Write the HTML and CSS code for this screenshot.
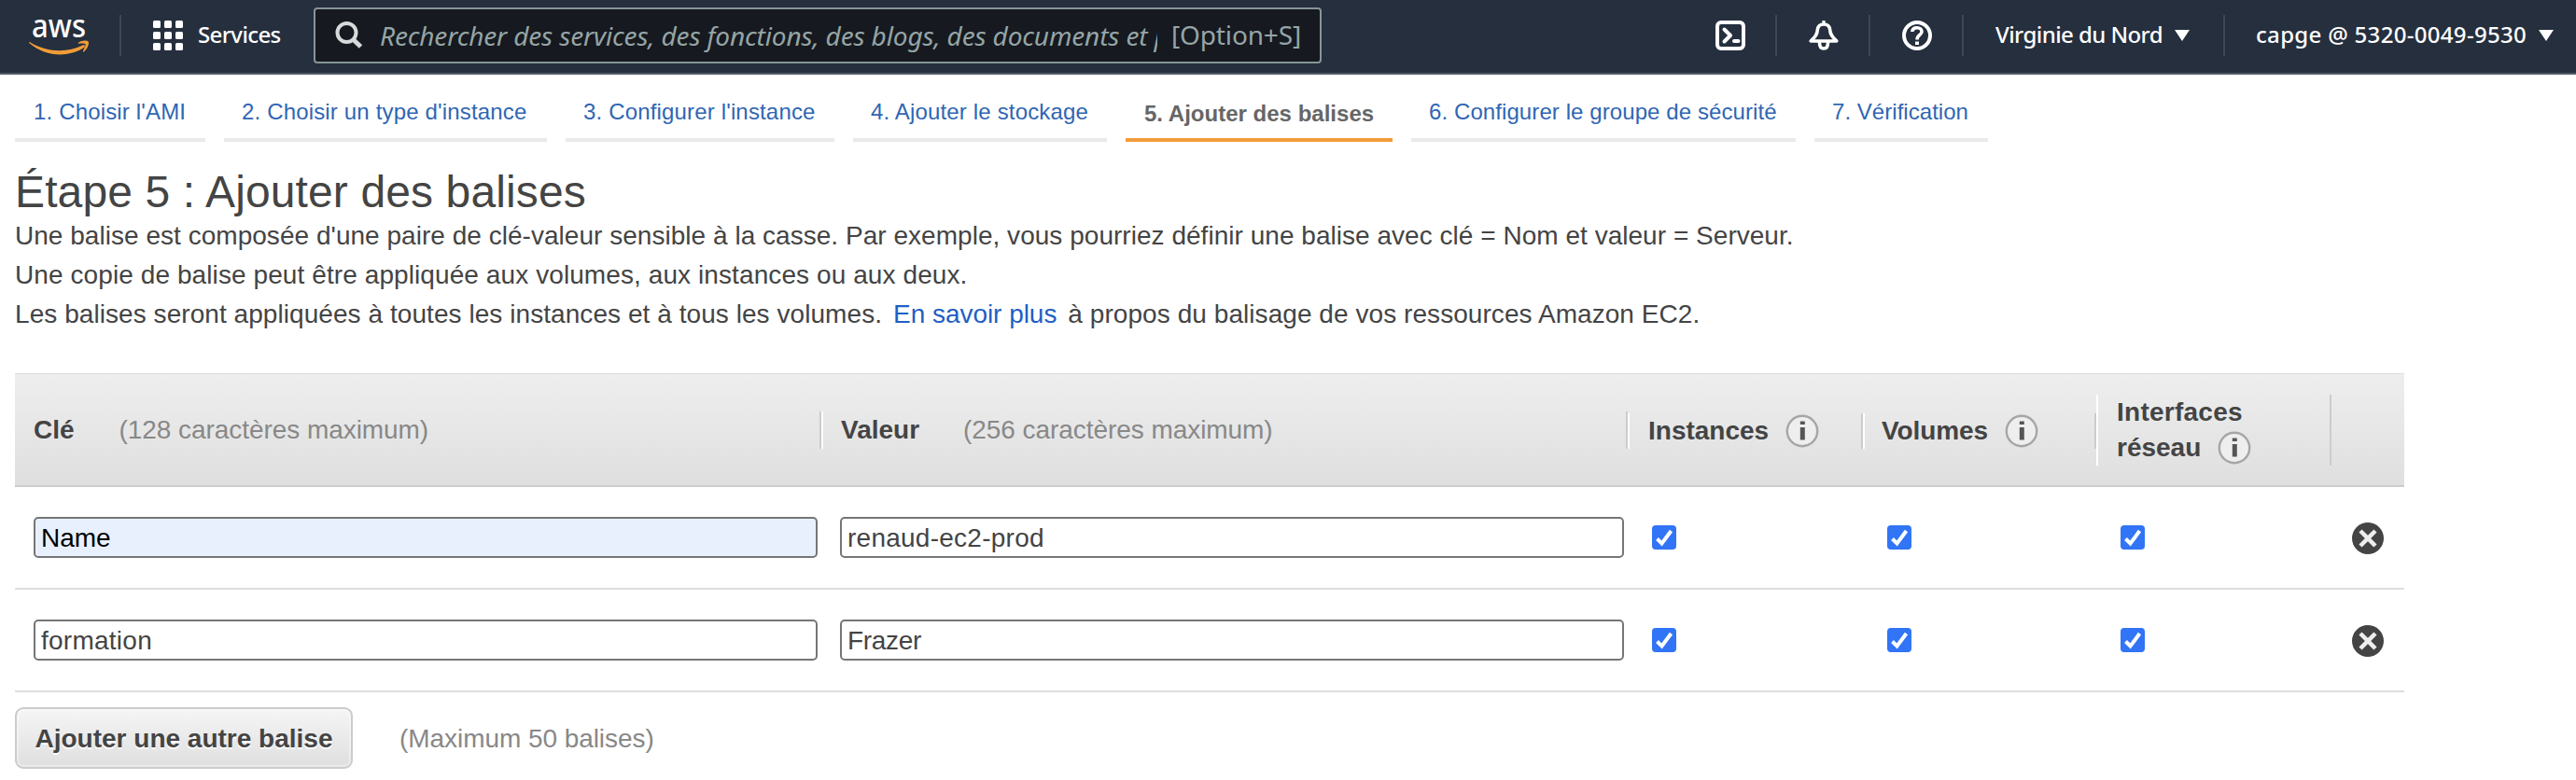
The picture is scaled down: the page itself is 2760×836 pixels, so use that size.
FILE: index.html
```
<!DOCTYPE html>
<html lang="fr">
<head>
<meta charset="utf-8">
<title>Étape 5 : Ajouter des balises</title>
<link rel="stylesheet" href="styles.css">
</head>
<body>
<header class="topbar">
  <svg class="logo" width="66" height="60" viewBox="0 -16 66 60">
    <text class="logo-text" x="3" y="22" textLength="58" lengthAdjust="spacingAndGlyphs">aws</text>
    <path d="M1.2 27.2C20 38.5 41 38.500 57.500 30.500C59.500 29.500 61 31.500 59 33C43 43.500 18 43.500 .8 28.500C-.2 27.500 .2 26.600 1.200 27.200Z" fill="#f29c38"/>
    <path d="M53 27.800C56 25 62 25 63.700 26.500C65 29 62 35.500 58.800 37.500C58 38 57.700 37.400 58 36.700C59.500 33.500 61.200 30 60.500 29.200C59.500 28.200 56 28.300 53.500 28.800C52.800 28.900 52.400 28.400 53 27.800Z" fill="#f29c38"/>
  </svg>
  <span class="sep"></span>
  <a class="services"><svg width="32" height="32" viewBox="0 0 32 32" fill="#fff">
    <rect width="8" height="8" rx="1.500"/><rect x="12" width="8" height="8" rx="1.500"/><rect x="24" width="8" height="8" rx="1.500"/>
    <rect y="12" width="8" height="8" rx="1.500"/><rect x="12" y="12" width="8" height="8" rx="1.500"/><rect x="24" y="12" width="8" height="8" rx="1.500"/>
    <rect y="24" width="8" height="8" rx="1.500"/><rect x="12" y="24" width="8" height="8" rx="1.500"/><rect x="24" y="24" width="8" height="8" rx="1.500"/></svg><span class="nav-text t-services">Services</span></a>
  <div class="search">
    <svg width="30" height="30" viewBox="0 0 30 30" fill="none" stroke="#d5dbdb"><circle cx="12.500" cy="12" r="10" stroke-width="4"/><path d="M19 19L27.500 27" stroke-width="5"/></svg>
    <span class="placeholder">Rechercher des services, des fonctions, des blogs, des documents et p</span>
    <span class="shortcut">[Option+S]</span>
  </div>
  <nav class="tools">
    <a class="tool"><svg width="32" height="32" viewBox="0 0 32 32" fill="none" stroke="#fff" stroke-width="4" stroke-linejoin="round" stroke-linecap="round"><rect x="2" y="2" width="28" height="28" rx="4"/><path d="M9.500 9.500L16 16L9.500 22.500" /><path d="M20 22H24.500"/></svg></a>
    <span class="sep"></span>
    <a class="tool bell"><svg width="32" height="32" viewBox="0 0 32 32" fill="none" stroke="#fff" stroke-width="3.600" stroke-linejoin="round" stroke-linecap="round"><path d="M16 1.500V4M16 4C11.500 4 9.500 7 9.300 10C9 16 6 18 2.200 22H29.800C26 18 23 16 22.700 10C22.500 7 20.500 4 16 4Z"/><path d="M11.500 24C11.500 28 13 30 16 30S20.500 28 20.500 24"/></svg></a>
    <span class="sep"></span>
    <a class="tool bell"><svg width="32" height="32" viewBox="0 0 32 32" fill="none" stroke="#fff"><circle cx="16" cy="16" r="14" stroke-width="4"/><path d="M10.800 12C11 9 13 7.800 16 7.800S21 9.500 21 12C21 15.500 16 15.500 16 20.500" stroke-width="3.600"/><path d="M16 22.500V26" stroke-width="4"/></svg></a>
    <span class="sep"></span>
    <a class="menu region"><span class="nav-text t-region">Virginie du Nord</span><i class="caret"></i></a>
    <span class="sep"></span>
    <a class="menu account"><span class="nav-text t-account">capge @ 5320-0049-9530</span><i class="caret"></i></a>
  </nav>
</header>

<main class="page">
  <nav class="steps">
    <a class="step s1">1. Choisir l'AMI</a>
    <a class="step s2">2. Choisir un type d'instance</a>
    <a class="step s3">3. Configurer l'instance</a>
    <a class="step s4">4. Ajouter le stockage</a>
    <a class="step s5 active">5. Ajouter des balises</a>
    <a class="step s6">6. Configurer le groupe de sécurité</a>
    <a class="step s7">7. Vérification</a>
  </nav>

  <h1 class="title">Étape 5 : Ajouter des balises</h1>
  <div class="intro">
    <p class="p1">Une balise est composée d'une paire de clé-valeur sensible à la casse. Par exemple, vous pourriez définir une balise avec clé = Nom et valeur = Serveur.</p>
    <p class="p2">Une copie de balise peut être appliquée aux volumes, aux instances ou aux deux.</p>
    <p class="p3"><span>Les balises seront appliquées à toutes les instances et à tous les volumes.</span><a class="link">En savoir plus</a><span>à propos du balisage de vos ressources Amazon EC2.</span></p>
  </div>

  <section class="tags">
    <div class="row head">
      <div class="cell"><b>Clé</b><span class="hint">(128 caractères maximum)</span></div>
      <div class="cell value"><b>Valeur</b><span class="hint">(256 caractères maximum)</span></div>
      <div class="cell low"><b>Instances</b><svg class="info" width="36" height="36" viewBox="0 0 36 36"><circle cx="18" cy="18" r="16.200" fill="#eee" stroke="#a6a6a6" stroke-width="2.400"/><path d="M18.300 14V27.500" stroke="#555" stroke-width="5"/><path d="M18.300 7.500V11" stroke="#555" stroke-width="5"/></svg></div>
      <div class="cell low volumes"><b>Volumes</b><svg class="info" width="36" height="36" viewBox="0 0 36 36"><circle cx="18" cy="18" r="16.200" fill="#eee" stroke="#a6a6a6" stroke-width="2.400"/><path d="M18.300 14V27.500" stroke="#555" stroke-width="5"/><path d="M18.300 7.500V11" stroke="#555" stroke-width="5"/></svg></div>
      <div class="cell network"><b>Interfaces</b><div class="second"><b>réseau</b><svg class="info" width="36" height="36" viewBox="0 0 36 36"><circle cx="18" cy="18" r="16.200" fill="#eee" stroke="#a6a6a6" stroke-width="2.400"/><path d="M18.300 14V27.500" stroke="#555" stroke-width="5"/><path d="M18.300 7.500V11" stroke="#555" stroke-width="5"/></svg></div></div>
      <div class="cell last"></div>
    </div>
    <div class="row">
      <input class="field autofilled" value="Name"><input class="field loose" value="renaud-ec2-prod">
      <span class="check"><svg width="26" height="26" viewBox="0 0 26 26"><rect width="26" height="26" rx="4" fill="#3174f6"/><path d="M5.500 14.500L10.500 19.500L20.500 6" fill="none" stroke="#fff" stroke-width="4"/></svg></span>
      <span class="check"><svg width="26" height="26" viewBox="0 0 26 26"><rect width="26" height="26" rx="4" fill="#3174f6"/><path d="M5.500 14.500L10.500 19.500L20.500 6" fill="none" stroke="#fff" stroke-width="4"/></svg></span>
      <span class="check"><svg width="26" height="26" viewBox="0 0 26 26"><rect width="26" height="26" rx="4" fill="#3174f6"/><path d="M5.500 14.500L10.500 19.500L20.500 6" fill="none" stroke="#fff" stroke-width="4"/></svg></span>
      <span class="remove"><svg width="34" height="34" viewBox="0 0 34 34"><circle cx="17" cy="17" r="17" fill="#444"/><path d="M9 9L25 25M25 9L9 25" stroke="#eee" stroke-width="4.500"/></svg></span>
    </div>
    <div class="row">
      <input class="field loose" value="formation"><input class="field tight" value="Frazer">
      <span class="check"><svg width="26" height="26" viewBox="0 0 26 26"><rect width="26" height="26" rx="4" fill="#3174f6"/><path d="M5.500 14.500L10.500 19.500L20.500 6" fill="none" stroke="#fff" stroke-width="4"/></svg></span>
      <span class="check"><svg width="26" height="26" viewBox="0 0 26 26"><rect width="26" height="26" rx="4" fill="#3174f6"/><path d="M5.500 14.500L10.500 19.500L20.500 6" fill="none" stroke="#fff" stroke-width="4"/></svg></span>
      <span class="check"><svg width="26" height="26" viewBox="0 0 26 26"><rect width="26" height="26" rx="4" fill="#3174f6"/><path d="M5.500 14.500L10.500 19.500L20.500 6" fill="none" stroke="#fff" stroke-width="4"/></svg></span>
      <span class="remove"><svg width="34" height="34" viewBox="0 0 34 34"><circle cx="17" cy="17" r="17" fill="#444"/><path d="M9 9L25 25M25 9L9 25" stroke="#eee" stroke-width="4.500"/></svg></span>
    </div>
  </section>

  <div class="actions">
    <button class="add">Ajouter une autre balise</button>
    <span class="hint limit">(Maximum 50 balises)</span>
  </div>
</main>
</body>
</html>
```
FILE: styles.css
```
* { box-sizing: border-box; }
body {
  margin: 0;
  width: 2760px;
  height: 836px;
  overflow: hidden;
  background: #fff;
  color: #444;
  font-family: "Liberation Sans", Arial, sans-serif;
  font-size: 28px;
}
svg { display: block; flex: none; }

.topbar {
  display: flex;
  align-items: center;
  height: 80px;
  padding-bottom: 2px;
  border-bottom: 2px solid #545b64;
  background: #252f3e;
  color: #fff;
  font-family: "Noto Sans", "Open Sans", sans-serif;
  font-size: 24px;
  white-space: nowrap;
}
.logo { margin: -12px 0 0 31px; overflow: visible; }
.logo-text { font: 500 34px "Noto Sans", sans-serif; fill: #fff; }
.topbar .sep { flex: none; width: 2px; height: 44px; background: #414750; }
.logo + .sep { margin-left: 31px; }
.services { display: flex; align-items: center; gap: 16px; width: 172px; margin-left: 34px; }
.nav-text { padding-bottom: 3px; font-weight: 500; }
.t-services { letter-spacing: -.6px; }
.t-region { letter-spacing: -.57px; }
.t-account { letter-spacing: .31px; }
.search {
  display: flex;
  align-items: center;
  width: 1080px;
  height: 60px;
  padding-left: 21px;
  border: 2px solid #879596;
  border-radius: 4px;
  background: #16191f;
  color: #95a5a6;
  font-size: 28px;
}
.placeholder { width: 834px; margin-left: 17px; padding-left: 1px; overflow: hidden; font-style: italic; letter-spacing: -.14px; }
.shortcut { margin-left: 15px; padding-bottom: 2px; letter-spacing: -.15px; }
.tools { display: flex; align-items: center; margin-left: 404px; }
.tool { display: flex; justify-content: center; width: 98px; }
.tool:first-child { width: 82px; justify-content: flex-end; padding-right: 32px; }
.tool.bell { padding-left: 2px; }
.menu { display: flex; align-items: center; justify-content: space-between; }
.region { width: 278px; padding: 0 36px 0 34px; }
.account { width: 352px; padding-left: 33px; }
.caret { width: 16px; height: 12px; background: #fff; clip-path: polygon(0 0, 100% 0, 50% 100%); }

.page { width: 2560px; margin-left: 16px; }
.steps { display: flex; gap: 20px; height: 72px; }
.step {
  padding: 26px 0 0 19px;
  border-bottom: 4px solid #eaeaea;
  color: #2f66b3;
  font-size: 24px;
  line-height: 27px;
  letter-spacing: .16px;
  white-space: nowrap;
}
.step.active { padding: 28px 0 0 20px; border-color: #f29c38; color: #666; font-weight: 700; letter-spacing: .01px; }
.s1 { width: 204px; padding-left: 20px; } .s2 { width: 346px; } .s3 { width: 288px; } .s4 { width: 272px; }
.s5 { width: 286px; } .s6 { width: 412px; letter-spacing: .09px; } .s7 { width: 186px; letter-spacing: .04px; }

.title { margin: 0; height: 80px; padding-top: 27px; font-size: 48px; font-weight: 400; line-height: 54px; letter-spacing: .12px; white-space: nowrap; }
.intro { height: 168px; line-height: 42px; white-space: nowrap; }
.intro p { margin: 0; }
.p1 { letter-spacing: .03px; }
.p2 { letter-spacing: .09px; }
.p3 { letter-spacing: .06px; }
.link { margin: 0 12px 0 12px; color: #1f5fc4; letter-spacing: -.04px; }

.row {
  display: grid;
  grid-template-columns: 864px 864px 252px 250px 252px 78px;
  align-items: center;
  height: 110px;
  border-bottom: 2px solid #ddd;
}
.head { height: 122px; border-top: 1px solid #ddd; border-bottom-color: #ccc; background: linear-gradient(#eee, #dfdfdf); }
.cell { display: flex; align-items: center; height: 40px; padding-left: 20px; border-left: 2px solid #fff; border-right: 2px solid #ccc; white-space: nowrap; }
.cell:first-child { border-left-color: transparent; padding-left: 18px; }
.cell.value { padding-left: 19px; }
.value .hint { margin-left: 47px; }
.cell.low { height: 38px; margin-top: 2px; }
.low b { padding-top: 1px; }
.cell.volumes { padding-left: 18px; }
.cell b { font-weight: 700; }
.volumes b { letter-spacing: -.1px; }
.hint { margin-left: 48px; color: #888; letter-spacing: -.06px; }
.info { margin-left: 18px; }
.cell.network { flex-direction: column; align-items: flex-start; height: 76px; line-height: 38px; }
.network > b { letter-spacing: .25px; }
.second { display: flex; align-items: center; height: 38px; }
.cell.last { border: 0; }

.field {
  width: 840px;
  height: 44px;
  margin-left: 20px;
  padding: 1px 6px 0;
  border: 2px solid #767676;
  border-radius: 5px;
  background: #fff;
  color: #444;
  font: 28px "Liberation Sans", Arial, sans-serif;
}
.field.loose { letter-spacing: .25px; }
.field.tight { letter-spacing: -.3px; }
.field.autofilled { background: #e8f0fe; color: #000; }
.check { padding-left: 26px; }
.remove { padding: 1px 0 0 22px; }

.actions { display: flex; align-items: center; padding-top: 16px; white-space: nowrap; }
.hint.limit { margin-left: 50px; padding-top: 2px; }
.add {
  width: 362px;
  height: 66px;
  padding: 2px 0 0;
  border: 2px solid #ccc;
  border-radius: 9px;
  background: linear-gradient(#f5f5f5, #dfdfdf);
  box-shadow: inset 0 0 0 2px rgba(255, 255, 255, .35);
  color: #444;
  font: 700 28px "Liberation Sans", Arial, sans-serif;
  text-shadow: 0 2px 0 #fff;
}
```
